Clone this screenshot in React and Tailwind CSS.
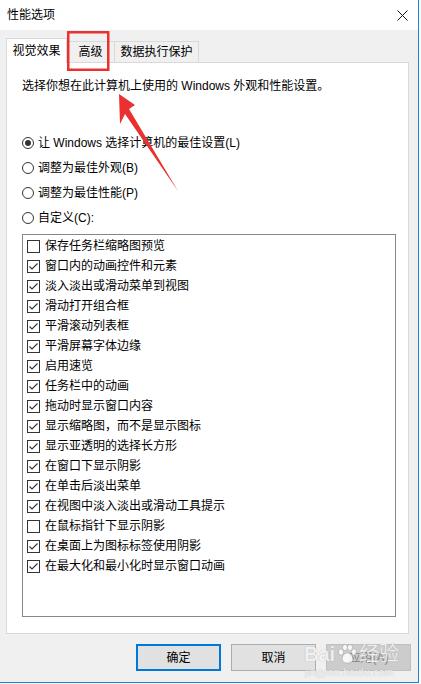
import React from 'react'

const FONT = "font-['Liberation_Sans','Noto_Sans_CJK_SC',sans-serif]"

const EFFECTS = [
  { label: '保存任务栏缩略图预览', checked: false },
  { label: '窗口内的动画控件和元素', checked: true },
  { label: '淡入淡出或滑动菜单到视图', checked: true },
  { label: '滑动打开组合框', checked: true },
  { label: '平滑滚动列表框', checked: true },
  { label: '平滑屏幕字体边缘', checked: true },
  { label: '启用速览', checked: true },
  { label: '任务栏中的动画', checked: true },
  { label: '拖动时显示窗口内容', checked: true },
  { label: '显示缩略图，而不是显示图标', checked: true },
  { label: '显示亚透明的选择长方形', checked: true },
  { label: '在窗口下显示阴影', checked: true },
  { label: '在单击后淡出菜单', checked: true },
  { label: '在视图中淡入淡出或滑动工具提示', checked: true },
  { label: '在鼠标指针下显示阴影', checked: false },
  { label: '在桌面上为图标标签使用阴影', checked: true },
  { label: '在最大化和最小化时显示窗口动画', checked: true },
]

const RADIOS = [
  { label: '让 Windows 选择计算机的最佳设置(L)', checked: true },
  { label: '调整为最佳外观(B)', checked: false },
  { label: '调整为最佳性能(P)', checked: false },
  { label: '自定义(C):', checked: false },
]

function Radio({ checked }) {
  return (
    <span className="w-[12px] h-[12px] rounded-full border border-[#333] bg-white flex items-center justify-center shrink-0">
      {checked && <span className="w-[6px] h-[6px] rounded-full bg-[#333]" />}
    </span>
  )
}

function Checkbox({ checked }) {
  return (
    <span className="w-[13px] h-[13px] border border-[#333] bg-white shrink-0 flex items-center justify-center">
      {checked && (
        <svg width="11" height="11" viewBox="0 0 11 11">
          <polyline points="1.5,5.5 4,8 9.5,2.5" fill="none" stroke="#333" strokeWidth="1.1" />
        </svg>
      )}
    </span>
  )
}

// 百度爪印
function Paw() {
  return (
    <svg width="22" height="22" viewBox="0 0 22 22" className="mx-[1px]">
      <g fill="rgba(255,255,255,0.85)" stroke="rgba(0,0,0,0.18)" strokeWidth="0.8">
        <ellipse cx="5" cy="9" rx="2.4" ry="3" />
        <ellipse cx="9" cy="4.5" rx="2.4" ry="3" />
        <ellipse cx="14" cy="4.5" rx="2.4" ry="3" />
        <ellipse cx="18" cy="9" rx="2.4" ry="3" />
        <path d="M11.5 10 C7 10 5 16 7 18.5 C9 20.5 14 20.5 16 18.5 C18 16 16 10 11.5 10 Z" />
      </g>
    </svg>
  )
}

export default function App() {
  return (
    <div className={`relative w-[421px] h-[684px] bg-white overflow-hidden text-[12px] text-black ${FONT}`}>
      <div className="w-[419px] h-[683px] flex flex-col border-r border-b border-[#1883d7] bg-[#f0f0f0]">
        {/* 标题栏 */}
        <div className="h-[30px] bg-white flex items-center justify-between pl-[7px] pr-[10px] shrink-0">
          <span className="leading-[16px]">性能选项</span>
          <svg width="11" height="11" viewBox="0 0 11 11">
            <path d="M0.5 0.5 L10.5 10.5 M10.5 0.5 L0.5 10.5" stroke="#111" strokeWidth="1" />
          </svg>
        </div>

        {/* 标签 */}
        <div className="h-[32px] flex items-end pl-[6px] shrink-0">
          <div className="relative z-10 w-[61px] h-[25px] mb-[-1px] bg-white border-l border-t border-r border-[#d9d9d9] flex items-center justify-center pb-[1px]">
            视觉效果
          </div>
          <div className="w-[48px] h-[21px] border-t border-r border-[#d9d9d9] flex items-center justify-center">
            高级
          </div>
          <div className="w-[84px] h-[21px] border-t border-r border-[#d9d9d9] flex items-center justify-center">
            数据执行保护
          </div>
        </div>

        {/* 面板 */}
        <div className="ml-[6px] w-[403px] h-[572px] bg-white border border-[#d9d9d9] flex flex-col shrink-0">
          <p className="mt-[15px] pl-[15px] leading-[16px]">选择你想在此计算机上使用的 Windows 外观和性能设置。</p>

          <div className="mt-[36px] pl-[15px] flex flex-col">
            {RADIOS.map(r => (
              <div key={r.label} className="h-[25px] flex items-center gap-[4px]">
                <Radio checked={r.checked} />
                <span className="leading-[16px]">{r.label}</span>
              </div>
            ))}
          </div>

          <div className="mt-[4px] ml-[15px] w-[374px] h-[383px] border border-[#828790] pt-[1px] pl-[4px] flex flex-col">
            {EFFECTS.map(e => (
              <div key={e.label} className="h-[20px] flex items-center gap-[5px]">
                <Checkbox checked={e.checked} />
                <span className="leading-[16px] whitespace-nowrap">{e.label}</span>
              </div>
            ))}
          </div>
        </div>

        {/* 按钮 */}
        <div className="mt-[10px] pl-[136px] flex gap-[10px]">
          <button className="w-[85px] h-[27px] bg-[#e1e1e1] border-2 border-[#0078d7]">确定</button>
          <button className="w-[85px] h-[27px] bg-[#e1e1e1] border border-[#adadad]">取消</button>
          <button className="w-[85px] h-[27px] bg-[#cccccc] border border-[#bfbfbf] text-[#838383]">应用(A)</button>
        </div>
      </div>

      {/* 水印 */}
      <div className="absolute left-[304px] top-[642px] flex flex-col items-start text-white/85 [text-shadow:0_0_1px_rgba(0,0,0,0.3)] pointer-events-none">
        <div className="flex items-center text-[20px] leading-[24px] font-bold">
          <span>Bai</span>
          <Paw />
          <span className="font-normal">经验</span>
        </div>
        <span className="text-[11px] leading-[12px] ml-[1px]">jingyan.baidu.com</span>
      </div>

      {/* 标注 */}
      <svg className="absolute left-0 top-0 pointer-events-none" width="421" height="684" viewBox="0 0 421 684">
        <rect x="68.25" y="32.25" width="40" height="37.5" fill="none" stroke="#ea3030" strokeWidth="2.5" />
        <polygon points="119,94 135,105 129,109 178,191 125,114 120,124" fill="#ea3030" />
      </svg>
    </div>
  )
}
